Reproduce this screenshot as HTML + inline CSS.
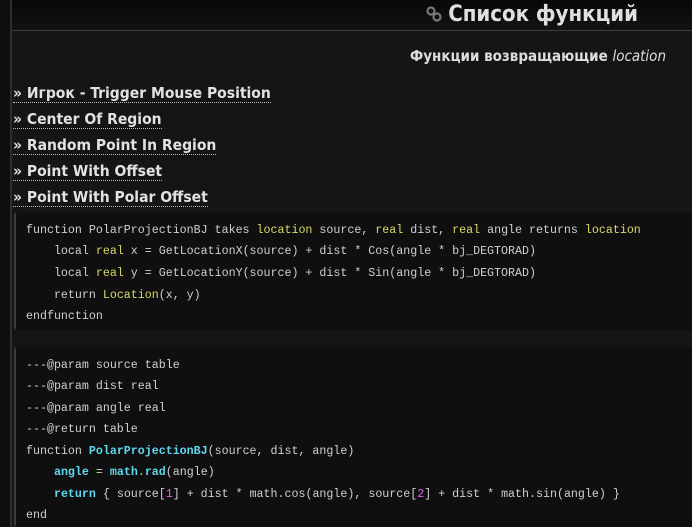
<!DOCTYPE html>
<html><head><meta charset="utf-8"><style>
html,body{margin:0;padding:0;}
body{width:692px;height:527px;overflow:hidden;background:#151515;font-family:"DejaVu Sans Condensed","Liberation Sans",sans-serif;color:#ddd;position:relative;}
.edge{position:absolute;left:0;top:0;width:10px;height:527px;background:#0e0e0e;border-right:2px solid #2e2e2e;}
.top{position:absolute;left:0;top:0;width:692px;height:30px;background:linear-gradient(#080808,#121212);}
.hline{position:absolute;left:12px;top:30px;width:680px;height:1px;background:#3c3c3c;}
.title{position:absolute;right:54px;top:2px;font-size:22px;font-weight:bold;color:#e0e0e0;}
.icon{position:absolute;left:425px;top:5px;}
.sub{position:absolute;right:26px;top:47px;font-size:15px;font-weight:bold;color:#ddd;}
.sub i{font-weight:normal;font-style:italic;}
.lnk{position:absolute;left:13px;font-size:15.5px;font-weight:bold;color:#e2e2e2;border-bottom:1px dotted #bbb;line-height:18px;}
.code{position:absolute;left:14px;right:0;background:#0f0f0f;border-left:2px solid #3a3a3a;border-radius:3px 0 0 3px;font-family:"Liberation Mono",monospace;font-size:11.65px;color:#d0d0d0;}
.code div{position:absolute;left:10px;white-space:pre;}
.y{color:#d9d96a}.c{color:#5fd7ee;font-weight:bold}.p{color:#e060e0}
</style></head><body>
<div class="top"></div>
<div class="edge"></div>
<div class="hline"></div>
<svg class="icon" width="18" height="18" viewBox="0 0 18 18"><g fill="none" stroke="#777" stroke-width="2.2"><circle cx="6" cy="6" r="3.5"/><circle cx="12" cy="12" r="3.5"/></g></svg>
<div class="title">Список функций</div>
<div class="sub">Функции возвращающие <i>location</i></div>
<div class="lnk" style="top:84px">» Игрок - Trigger Mouse Position</div>
<div class="lnk" style="top:110px">» Center Of Region</div>
<div class="lnk" style="top:136px">» Random Point In Region</div>
<div class="lnk" style="top:162px">» Point With Offset</div>
<div class="lnk" style="top:188px">» Point With Polar Offset</div>
<div class="code" style="top:212px;height:118px;">
<div style="top:12px">function PolarProjectionBJ takes <span class="y">location</span> source, <span class="y">real</span> dist, <span class="y">real</span> angle returns <span class="y">location</span></div>
<div style="top:33px">    local <span class="y">real</span> x = GetLocationX(source) + dist * Cos(angle * bj_DEGTORAD)</div>
<div style="top:55px">    local <span class="y">real</span> y = GetLocationY(source) + dist * Sin(angle * bj_DEGTORAD)</div>
<div style="top:77px">    return <span class="y">Location</span>(x, y)</div>
<div style="top:98px">endfunction</div>
</div>
<div class="code" style="top:347px;height:180px;">
<div style="top:12px">---@param source table</div>
<div style="top:33px">---@param dist real</div>
<div style="top:55px">---@param angle real</div>
<div style="top:76px">---@return table</div>
<div style="top:98px">function <span class="c">PolarProjectionBJ</span>(source, dist, angle)</div>
<div style="top:119px">    <span class="c">angle</span> = <span class="c">math</span>.<span class="c">rad</span>(angle)</div>
<div style="top:141px">    <span class="c">return</span> { source[<span class="p">1</span>] + dist * math.cos(angle), source[<span class="p">2</span>] + dist * math.sin(angle) }</div>
<div style="top:162px">end</div>
</div>
</body></html>
